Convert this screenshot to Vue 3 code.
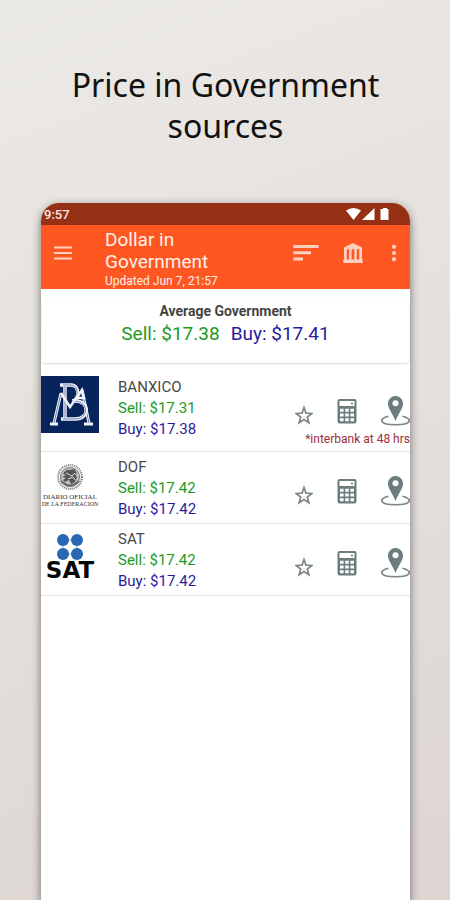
<template>
  <div class="page">
    <h1 class="headline">Price in Government sources</h1>

    <main class="phone">
      <div class="status-bar">
        <span>9:57</span>
        <svg class="status-icons" viewBox="0 0 44 14" aria-hidden="true">
          <path d="M0 3.5Q7.500-1.500 15 3.500L7.500 13Z" />
          <path d="M28.500 1V13H16Z" />
          <path d="M37 1h4v1h1.500v11h-8V2H37Z" />
        </svg>
      </div>

      <header class="app-bar">
        <button class="icon-button menu" type="button" aria-label="Menu">
          <svg width="20" height="16" viewBox="0 0 20 16" aria-hidden="true">
            <path d="M1 2.500h18M1 8h18M1 13.500h18" stroke-width="2.200" />
          </svg>
        </button>
        <div class="titles">
          <h2>Dollar in Government</h2>
          <p>Updated Jun 7, 21:57</p>
        </div>
        <nav class="actions">
          <button class="icon-button" type="button" aria-label="Sort">
            <svg width="26" height="20" viewBox="0 0 26 20" aria-hidden="true">
              <path d="M0.500 3.500h25M0.500 9.700h17.500M0.500 16h9.500" stroke-width="3" />
            </svg>
          </button>
          <button class="icon-button" type="button" aria-label="Banks">
            <svg width="20" height="20" viewBox="0 0 20 20" aria-hidden="true">
              <path class="solid" d="M10 0L19 4.500V6.300H1V4.500ZM1 6h2.800v11H1ZM6.100 6h2.500v11H6.100ZM11.300 6h2.500v11h-2.500ZM16.200 6H19v11h-2.800ZM0.300 16.500h19.400V20H0.300Z" />
            </svg>
          </button>
          <button class="icon-button" type="button" aria-label="More options">
            <svg width="6" height="20" viewBox="0 0 6 20" aria-hidden="true">
              <circle class="solid" cx="3" cy="3.800" r="2.100" />
              <circle class="solid" cx="3" cy="10" r="2.100" />
              <circle class="solid" cx="3" cy="16.200" r="2.100" />
            </svg>
          </button>
        </nav>
      </header>

      <section class="average">
        <h3>Average Government</h3>
        <p class="average-prices">
          <span class="sell">Sell: ${{ average.sell }}</span>
          <span class="buy">Buy: ${{ average.buy }}</span>
        </p>
      </section>

      <ul class="sources">
        <li v-for="source in sources" :key="source.name" class="source">
          <div class="logo">
            <svg v-if="source.name === 'BANXICO'" class="logo-banxico" viewBox="0 0 58 57" aria-hidden="true">
              <rect width="58" height="57" />
              <g class="monogram">
                <path d="M20 17L13 47M41 14L48 47M9 48h8M43 48h9" stroke-width="3" />
                <path d="M20 17L13 47M41 14L48 47" class="inline" />
                <path d="M19 9H30C39 9 39 25 31 25M34 25C49 25 49 43 34 43H20M24 9V43" stroke-width="3.500" />
                <path d="M22 9H30C38 9 38 24 31 25M34 25C48 26 48 43 34 43H22M24 10V42" class="inline" />
                <path d="M20 17L29 31L41 14L43 22H37" stroke-width="2.500" />
              </g>
            </svg>
            <div v-else-if="source.name === 'DOF'" class="logo-dof">
              <svg viewBox="0 0 28 28" aria-hidden="true">
                <circle cx="14" cy="14" r="12" fill="#eee" stroke="#777" stroke-width="2" stroke-dasharray="1 1" />
                <circle cx="14" cy="14" r="9.500" fill="#c4c4c4" stroke="#777" />
                <path d="M7 11q3-5 7-4l4-1 3 4-2 1 2 3-2 5-4 2-2-4-4 2-2-2 3-2-4-1 4-2Z" fill="#555" />
                <path d="M10 10l6 3 3-3M12 16l5-2 2 3" fill="none" stroke="#ddd" />
                <path d="M5 18q9 9 18 0" fill="none" stroke="#666" stroke-width="2" />
              </svg>
              <span class="dof-title">DIARIO OFICIAL</span>
              <span class="dof-subtitle">DE LA FEDERACION</span>
            </div>
            <div v-else class="logo-sat">
              <svg viewBox="0 0 26 26" aria-hidden="true">
                <path d="M6 6h14v14H6Z" fill="none" stroke="#8db4dc" />
                <circle cx="6" cy="6" r="6" />
                <circle cx="20" cy="6" r="6" />
                <circle cx="6" cy="20" r="6" />
                <circle cx="20" cy="20" r="6" />
              </svg>
              <span>SAT</span>
            </div>
          </div>

          <div class="prices">
            <h3>{{ source.name }}</h3>
            <p class="sell">Sell: ${{ source.sell }}</p>
            <p class="buy">Buy: ${{ source.buy }}</p>
          </div>

          <div class="tools">
            <div class="tool-icons">
              <button class="icon-button" type="button" :aria-label="`Favorite ${source.name}`">
                <svg width="18" height="30" viewBox="0 0 18 30" aria-hidden="true">
                  <path d="M9 11.500l2 5.700 5.900.3-4.600 3.600 1.600 5.700L9 23.600l-4.900 3.200 1.600-5.700L1.100 17.500l5.900-.3Z" fill="none" stroke="#7b8787" stroke-width="1.700" />
                </svg>
              </button>
              <button class="icon-button" type="button" :aria-label="`Calculator ${source.name}`">
                <svg width="20" height="30" viewBox="0 0 20 30" aria-hidden="true">
                  <rect x="0.500" y="3" width="19" height="24.500" rx="2" fill="#6d7c7c" />
                  <rect x="2.500" y="5" width="15" height="5" fill="#fff" />
                  <path d="M14 7.500h2" stroke="#6d7c7c" stroke-width="1.500" />
                  <path d="M3 14.200h3.600M8.200 14.200h3.600M13.400 14.200H17M3 19h3.600M8.200 19h3.600M13.400 19H17M3 23.800h3.600M8.200 23.800h3.600M13.400 23.800H17" stroke="#fff" stroke-width="3" />
                </svg>
              </button>
              <button class="icon-button" type="button" :aria-label="`Location ${source.name}`">
                <svg width="29" height="30" viewBox="0 0 29 30" aria-hidden="true">
                  <path d="M14.500 0a7.500 7.500 0 0 1 7.500 7.500C22 13 17.500 17 14.500 25C11.500 17 7 13 7 7.500A7.500 7.500 0 0 1 14.500 0Z" fill="#6d7c7c" />
                  <circle cx="14.500" cy="7.300" r="3" fill="#fff" />
                  <path d="M7.500 20.300C-3 22.500-2 28.800 14.500 28.800S32 22.500 21.500 20.300" fill="none" stroke="#7b8787" stroke-width="1.600" />
                </svg>
              </button>
            </div>
            <p v-if="source.note" class="note">{{ source.note }}</p>
          </div>
        </li>
      </ul>
    </main>
  </div>
</template>

<script setup>
const average = { sell: '17.38', buy: '17.41' }

const sources = [
  { name: 'BANXICO', sell: '17.31', buy: '17.38', note: '*interbank at 48 hrs' },
  { name: 'DOF', sell: '17.42', buy: '17.42' },
  { name: 'SAT', sell: '17.42', buy: '17.42' }
]
</script>

<style>
body {
  margin: 0;
}
</style>

<style scoped>
.page {
  display: flex;
  flex-direction: column;
  box-sizing: border-box;
  min-height: 100vh;
  padding: 64px 40px 0 41px;
  background: linear-gradient(160deg, #ebe9e6 0%, #e4e0dc 50%, #ddd5d1 100%);
  font-family: Roboto, sans-serif;
}

h1,
h2,
h3,
p,
ul {
  margin: 0;
  padding: 0;
  font-weight: 400;
}

.headline {
  max-width: 330px;
  margin: 0 auto 57px;
  color: #111;
  font-family: "Noto Sans", sans-serif;
  font-size: 32px;
  line-height: 41px;
  text-align: center;
}

.phone {
  flex: 1;
  overflow: hidden;
  border-radius: 18px 18px 0 0;
  background: #fff;
  box-shadow: 0 3px 10px rgba(0, 0, 0, 0.5);
}

.status-bar {
  display: flex;
  align-items: center;
  justify-content: space-between;
  height: 22px;
  padding: 0 20px 0 3px;
  background: #963014;
  color: #fbe9e4;
  font-size: 13px;
  font-weight: 500;
}

.status-icons {
  width: 44px;
  height: 14px;
  fill: #fff;
}

.app-bar {
  display: flex;
  align-items: center;
  box-sizing: border-box;
  height: 64px;
  padding: 0 13px 0 12px;
  background: #ff5722;
  color: #fff0ea;
}

.icon-button {
  display: block;
  padding: 0;
  border: 0;
  background: none;
  cursor: pointer;
}

.icon-button svg {
  display: block;
}

.app-bar .icon-button {
  margin-bottom: 8px;
}

.app-bar svg {
  fill: none;
  stroke: #ffd0bf;
}

.app-bar .solid {
  fill: #ffd0bf;
  stroke: none;
}

.titles {
  flex: 1;
  align-self: flex-end;
  margin-left: 32px;
}

.titles h2 {
  max-width: 120px;
  font-size: 19px;
  line-height: 22px;
}

.titles p {
  font-size: 12px;
  line-height: 16px;
}

.actions {
  display: flex;
  gap: 24px;
}

.actions .icon-button:last-child {
  margin-left: 4px;
}

.average {
  margin: 9px 1px;
  padding: 4px 0 15px;
  border-radius: 4px;
  box-shadow: 0 1px 2px rgba(0, 0, 0, 0.15);
  text-align: center;
}

.average h3 {
  color: #444;
  font-size: 14px;
  font-weight: 700;
  line-height: 18px;
}

.average-prices {
  display: flex;
  justify-content: center;
  gap: 11px;
  font-size: 19px;
  line-height: 28px;
}

.sell {
  color: #1b9a1f;
}

.buy {
  color: #2a1c9c;
}

.sources {
  list-style: none;
}

.source {
  display: flex;
  padding-bottom: 3px;
  border-bottom: 1px solid #e2e2e2;
}

.logo {
  flex: none;
  width: 58px;
  padding-top: 4px;
}

.logo-banxico {
  display: block;
  width: 58px;
  height: 57px;
  fill: #07245b;
}

.monogram {
  fill: none;
  stroke: #f2f4fa;
}

.monogram .inline {
  stroke: #6d7fa6;
  stroke-width: 1;
}

.logo-dof {
  display: flex;
  flex-direction: column;
  align-items: center;
  padding-top: 7px;
  color: #333;
  font-family: "Liberation Serif", serif;
  white-space: nowrap;
}

.logo-dof svg {
  width: 28px;
  height: 28px;
  margin-bottom: 3px;
}

.dof-title {
  font-size: 7px;
  line-height: 7px;
}

.dof-subtitle {
  font-size: 6px;
  line-height: 6px;
}

.logo-sat {
  display: flex;
  flex-direction: column;
  align-items: center;
  padding-top: 6px;
  color: #050505;
  font-family: "DejaVu Sans", sans-serif;
  font-size: 23px;
  font-weight: 700;
  line-height: 21px;
}

.logo-sat svg {
  width: 26px;
  height: 26px;
  fill: #2868b2;
}

.prices {
  flex: 1;
  padding: 5px 0 0 19px;
  font-size: 15px;
  line-height: 21px;
}

.prices h3 {
  color: #484848;
  font-size: 15px;
}

.tools {
  padding-top: 24px;
}

.tool-icons {
  display: flex;
  justify-content: flex-end;
  gap: 24px;
}

.note {
  margin-top: 5px;
  color: #a02c3c;
  font-size: 12px;
  line-height: 17px;
  text-align: right;
}
</style>
